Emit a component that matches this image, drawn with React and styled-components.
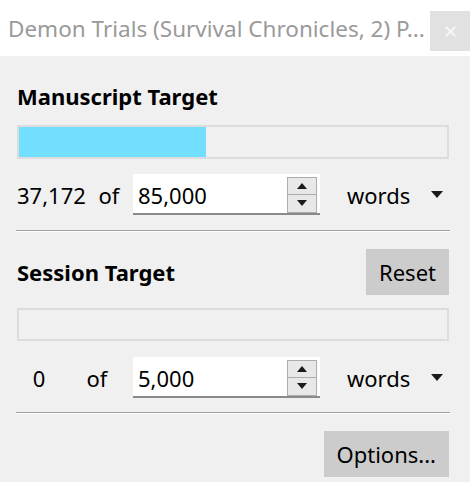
import React from "react";
import styled, { createGlobalStyle } from "styled-components";

const GlobalStyle = createGlobalStyle`
  html, body {
    margin: 0;
    padding: 0;
    background: #f0f0f0;
  }
  body {
    font-family: "Noto Sans", "Open Sans", sans-serif;
    color: #000;
  }
`;

const Window = styled.div`
  width: 470px;
  height: 482px;
  display: flex;
  flex-direction: column;
  background: #f0f0f0;
  overflow: hidden;
`;

const TitleBar = styled.div`
  height: 56px;
  display: flex;
  align-items: flex-start;
  background: #fff;
  padding-left: 8px;
`;

const Title = styled.div`
  flex: 1;
  min-width: 0;
  margin-top: 14px;
  font-size: 22.5px;
  line-height: 30px;
  color: #9a9a9a;
  white-space: nowrap;
  overflow: hidden;
`;

const CloseButton = styled.div`
  width: 40px;
  height: 40px;
  margin-top: 11px;
  background: #e1e1e1;
  color: #f7f7f7;
  display: flex;
  align-items: center;
  justify-content: center;
  font-size: 18px;
`;

const Body = styled.div`
  display: flex;
  flex-direction: column;
  padding: 0 21px 0 17px;
  font-size: 22px;
`;

const HeadingRow = styled.div`
  display: flex;
  align-items: center;
  justify-content: space-between;
  height: ${(p) => p.h}px;
  margin-top: ${(p) => p.top}px;
`;

const Heading = styled.div`
  font-size: 22px;
  font-weight: 700;
  line-height: 30px;
`;

const Button = styled.div`
  height: 46px;
  padding: 0 13px;
  display: flex;
  align-items: center;
  background: #cccccc;
`;

const Bar = styled.div`
  height: ${(p) => p.h}px;
  margin-top: ${(p) => p.top}px;
  border: 2px solid #dcdcdc;
  box-sizing: border-box;
  background: #f0f0f0;
  display: flex;
`;

const Fill = styled.div`
  background: #73dfff;
  height: 100%;
`;

const CountRow = styled.div`
  display: flex;
  align-items: center;
  height: 41px;
  margin-top: ${(p) => p.top}px;
`;

const Count = styled.div`
  width: ${(p) => p.w}px;
  text-align: center;
`;

const Of = styled.div`
  width: ${(p) => p.w}px;
  text-align: center;
`;

const SpinBox = styled.div`
  width: 187px;
  height: 41px;
  box-sizing: border-box;
  display: flex;
  align-items: center;
  background: #fff;
  border-bottom: 2px solid #8a8a8a;
  padding: 2px 3px 0 5px;
`;

const SpinValue = styled.div`
  flex: 1;
`;

const SpinButtons = styled.div`
  width: 30px;
  height: 36px;
  display: flex;
  flex-direction: column;
  border: 1px solid #adadad;
  box-sizing: border-box;
  background: #e8e8e8;
`;

const SpinHalf = styled.div`
  flex: 1;
  display: flex;
  align-items: center;
  justify-content: center;
  & + & {
    border-top: 1px solid #adadad;
  }
`;

const Combo = styled.div`
  margin-left: 27px;
  flex: 1;
  display: flex;
  align-items: center;
  justify-content: space-between;
  padding-right: 6px;
`;

const Divider = styled.div`
  height: 1px;
  margin-top: ${(p) => p.top}px;
  margin-right: -1px;
  margin-left: -1px;
  background: #a0a0a0;
  border-bottom: 1px solid #fff;
`;

const Footer = styled.div`
  display: flex;
  justify-content: flex-end;
  margin-top: 17px;
`;

const Triangle = ({ up, w = 11, h = 6 }) => (
  <svg width={w} height={h} viewBox={`0 0 ${w} ${h}`}>
    <polygon
      points={up ? `0,${h} ${w / 2},0 ${w},${h}` : `0,0 ${w},0 ${w / 2},${h}`}
      fill="#1a1a1a"
    />
  </svg>
);

const Target = ({ count, countWidth, value }) => (
  <>
    <Count w={countWidth}>{count}</Count>
    <Of w={116 - countWidth}>of</Of>
    <SpinBox>
      <SpinValue>{value}</SpinValue>
      <SpinButtons>
        <SpinHalf>
          <Triangle up w={10} h={6} />
        </SpinHalf>
        <SpinHalf>
          <Triangle w={10} h={6} />
        </SpinHalf>
      </SpinButtons>
    </SpinBox>
    <Combo>
      <span>words</span>
      <Triangle w={12} h={7} />
    </Combo>
  </>
);

const App = () => {
  const progress = 37172 / 85000;
  return (
    <Window>
      <GlobalStyle />
      <TitleBar>
        <Title>Demon Trials (Survival Chronicles, 2) P...</Title>
        <CloseButton>✕</CloseButton>
      </TitleBar>
      <Body>
        <HeadingRow h={40} top={20}>
          <Heading>Manuscript Target</Heading>
        </HeadingRow>
        <Bar h={34} top={9}>
          <Fill style={{ width: `${progress * 100}%` }} />
        </Bar>
        <CountRow top={15}>
          <Target count="37,172" countWidth={68} value="85,000" />
        </CountRow>
        <Divider top={15} />
        <HeadingRow h={46} top={17}>
          <Heading>Session Target</Heading>
          <Button>Reset</Button>
        </HeadingRow>
        <Bar h={33} top={13}>
          <Fill style={{ width: 0 }} />
        </Bar>
        <CountRow top={16}>
          <Target count="0" countWidth={44} value="5,000" />
        </CountRow>
        <Divider top={14} />
        <Footer>
          <Button>Options...</Button>
        </Footer>
      </Body>
    </Window>
  );
};

export default App;
